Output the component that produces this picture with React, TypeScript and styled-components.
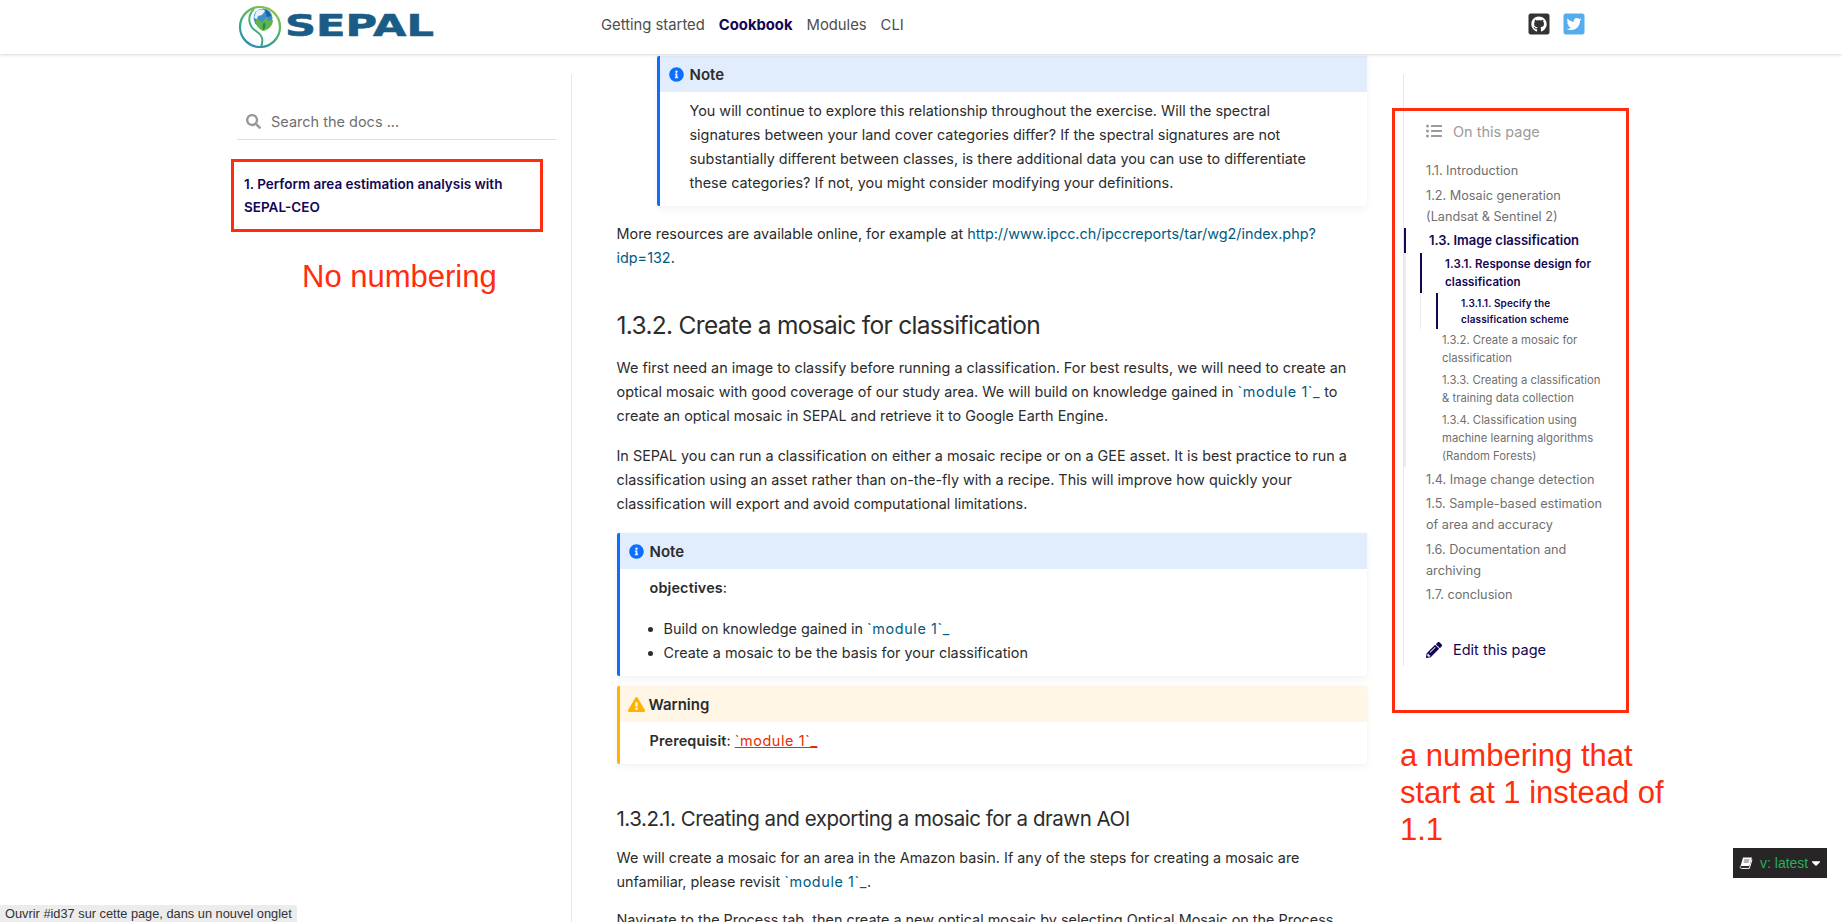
import React from "react";
import styled, { createGlobalStyle } from "styled-components";
import {
  FaCaretDown,
  FaExclamationTriangle,
  FaGithubSquare,
  FaInfoCircle,
  FaListUl,
  FaPencilAlt,
  FaSearch,
  FaTwitterSquare,
} from "react-icons/fa";

const INK = "#130654";
const TEXT = "#2c2c2c";
const LINK = "#005b81";
const MARK = "#ff2d0d";

const GlobalStyle = createGlobalStyle`
  html, body {
    margin: 0;
    height: 100%;
    overflow: hidden;
    background: #fff;
  }
  body {
    font-family: Inter, "Noto Sans", sans-serif;
    color: ${TEXT};
  }
  * { box-sizing: border-box; }
`;

const Page = styled.div`
  position: relative;
  height: 100vh;
  overflow: hidden;
  display: flex;
  flex-direction: column;
`;

/* top bar */
const Header = styled.header`
  position: relative;
  z-index: 2;
  flex: 0 0 54px;
  display: flex;
  align-items: center;
  padding: 0 256.5px 0 238px;
  background: #fff;
  box-shadow: 0 1px 3px rgba(0, 0, 0, 0.16);
`;

const Brand = styled.a`
  flex: 0 0 363px;
  display: flex;
  align-items: center;
  height: 54px;
`;

const Wordmark = styled.span`
  display: inline-block;
  margin: -4px 0 0 3px;
  font-family: "DejaVu Sans", sans-serif;
  font-weight: 700;
  font-size: 31px;
  line-height: 1;
  color: #1a5c86;
  -webkit-text-stroke: 0.6px #1a5c86;
  transform: scaleX(1.39);
  transform-origin: left center;
`;

const TopNav = styled.nav`
  display: flex;
  gap: 14px;
`;

const TopLink = styled.a<{ $active?: boolean }>`
  font-size: 14.8px;
  line-height: 22px;
  margin-top: -4px;
  font-weight: ${(p) => (p.$active ? 700 : 400)};
  color: ${(p) => (p.$active ? INK : "#4d4d4d")};
`;

const Socials = styled.div`
  margin-left: auto;
  display: flex;
  gap: 11px;
  margin-top: -7px;
`;

const Social = styled.a<{ $color: string }>`
  display: flex;
  color: ${(p) => p.$color};
  font-size: 24px;
`;

/* three columns */
const Body = styled.div`
  flex: 1;
  min-height: 0;
  display: grid;
  grid-template-columns: 572px 831px 1fr;
`;

const Sidebar = styled.aside`
  margin-top: 20px;
  padding: 30px 15px 0 237px;
  border-right: 1px solid #e6e6e6;
`;

const SearchForm = styled.form`
  display: flex;
  align-items: center;
  gap: 10px;
  height: 36px;
  padding-left: 9px;
  border-bottom: 1px solid #dedede;
  color: #999;
  font-size: 15px;
`;

const SearchInput = styled.input`
  flex: 1;
  border: 0;
  outline: 0;
  padding: 0;
  font: inherit;
  font-size: 14.5px;
  background: transparent;
  &::placeholder {
    color: #6f6f6f;
    opacity: 1;
  }
`;

const SideLink = styled.a`
  display: block;
  margin-top: 33px;
  padding: 0 30px 0 7px;
  font-size: 13.5px;
  font-weight: 600;
  line-height: 23px;
  color: ${INK};
`;

const Main = styled.main`
  padding: 2px 36px 0 44.5px;
  min-width: 0;
`;

const Admonition = styled.section<{ $indent?: boolean; $tone: "note" | "warning"; $gap?: number }>`
  margin: ${(p) => p.$gap ?? 0}px 0 0 ${(p) => (p.$indent ? 40 : 0)}px;
  padding-bottom: 11px;
  border-left: 3px solid ${(p) => (p.$tone === "note" ? "#0d6efd" : "#ffb300")};
  border-radius: 2px;
  box-shadow: 0 3px 8px rgba(0, 0, 0, 0.05), 0 0 1px rgba(0, 0, 0, 0.1);
`;

const AdmonitionTitle = styled.div<{ $tone: "note" | "warning" }>`
  display: flex;
  align-items: center;
  gap: ${(p) => (p.$tone === "note" ? 6 : 4)}px;
  height: 36px;
  padding-left: ${(p) => (p.$tone === "note" ? 9 : 8)}px;
  font-size: 15px;
  font-weight: 600;
  background: ${(p) => (p.$tone === "note" ? "#e1edfc" : "#fff6e5")};
  svg {
    flex: 0 0 auto;
    font-size: ${(p) => (p.$tone === "note" ? 15 : 17)}px;
    color: ${(p) => (p.$tone === "note" ? "#0d6efd" : "#ffb300")};
  }
`;

const AdmonitionBody = styled.div`
  padding: 7px 37px 0 30px;
`;

const Text = styled.p<{ $gap?: number }>`
  margin: ${(p) => p.$gap ?? 0}px 0 0;
  font-size: 14.4px;
  line-height: 24px;
  strong {
    font-weight: 600;
    letter-spacing: 0.15px;
  }
`;

const Link = styled.a`
  color: ${LINK};
`;

const ModuleRef = styled(Link)`
  letter-spacing: 0.6px;
`;

const WarnLink = styled.a`
  color: #e32e00;
  letter-spacing: 0.6px;
  text-decoration: underline;
`;

const Bullets = styled.ul`
  margin: 17px 0 0;
  padding: 0 0 0 14px;
  font-size: 14.4px;
  line-height: 24px;
`;

const SectionTitle = styled.h2`
  margin: 37px 0 13px;
  font-size: 24.5px;
  font-weight: 400;
  line-height: 36px;
  letter-spacing: -0.69px;
`;

const SubTitle = styled.h3`
  margin: 40px 0 12px;
  font-size: 20.5px;
  font-weight: 400;
  line-height: 30px;
  letter-spacing: -0.47px;
`;

/* right hand table of contents */
const Toc = styled.aside`
  align-self: start;
  height: 592px;
  margin-top: 20px;
  padding-top: 46px;
  border-left: 1px solid #e6e6e6;
  width: 202px;
`;

const TocHeading = styled.div`
  display: flex;
  align-items: center;
  gap: 11px;
  height: 22px;
  margin-bottom: 16px;
  padding-left: 22px;
  font-size: 14.5px;
  color: #9b9b9b;
  svg {
    font-size: 16px;
  }
`;

const TocList = styled.ul`
  list-style: none;
  margin: 0;
  padding: 0;
`;

const TocSubList = styled(TocList)<{ $thin?: boolean }>`
  border-left: ${(p) => (p.$thin ? "1px solid #ececec" : "2px solid #ececec")};
  padding-left: ${(p) => (p.$thin ? 15 : 14)}px;
`;

const TocLink = styled.a<{ $level: 1 | 2 | 3; $active?: boolean }>`
  display: block;
  padding: ${(p) => (p.$level === 1 ? "2px 0 1.5px" : "2px 0")};
  padding-left: ${(p) => (p.$active ? 23 : 22)}px;
  border-left: ${(p) => (p.$active ? `2px solid ${INK}` : "0")};
  font-size: ${(p) =>
    p.$level === 1 ? (p.$active ? 13 : 12.7) : p.$level === 2 ? (p.$active ? 11.5 : 11.3) : 10}px;
  letter-spacing: ${(p) => (p.$active && p.$level > 1 ? 0.12 : 0)}px;
  line-height: ${(p) => (p.$level === 1 ? 21 : p.$level === 2 ? 18 : 16)}px;
  font-weight: ${(p) => (p.$active ? 600 : 400)};
  color: ${(p) => (p.$active ? INK : "#6f6f6f")};
`;

const EditLink = styled.a`
  display: flex;
  align-items: center;
  gap: 11px;
  height: 22px;
  margin-top: 32px;
  padding-left: 22px;
  font-size: 14.5px;
  color: ${INK};
  svg {
    font-size: 16px;
  }
`;

/* things lying over the page */
const LeftMark = styled.div`
  position: absolute;
  left: 231px;
  top: 159px;
  width: 312px;
  height: 73px;
  border: 3px solid ${MARK};
`;

const RightMark = styled.div`
  position: absolute;
  left: 1392px;
  top: 108px;
  width: 237px;
  height: 605px;
  border: 3px solid ${MARK};
`;

const LeftRemark = styled.div`
  position: absolute;
  left: 302px;
  top: 258px;
  font-family: "Liberation Sans", Arial, sans-serif;
  font-size: 31px;
  line-height: 38px;
  color: ${MARK};
`;

const RightRemark = styled.div`
  position: absolute;
  left: 1400px;
  top: 737px;
  width: 290px;
  font-family: "Liberation Sans", Arial, sans-serif;
  font-size: 31px;
  line-height: 37px;
  color: ${MARK};
`;

const VersionBadge = styled.div`
  position: fixed;
  right: 15px;
  bottom: 44px;
  width: 94px;
  height: 30px;
  display: flex;
  align-items: center;
  padding-left: 6px;
  gap: 7px;
  background: #272525;
  color: #fff;
  font-family: "Liberation Sans", Arial, sans-serif;
  font-size: 14px;
`;

const VersionText = styled.span`
  color: #27ae60;
  margin-right: -6px;
`;

const StatusTip = styled.div`
  position: fixed;
  left: 0;
  bottom: 0;
  height: 17px;
  width: 297px;
  padding-left: 5px;
  background: #ececec;
  border-top-right-radius: 3px;
  font-family: "Liberation Sans", Arial, sans-serif;
  font-size: 12.8px;
  line-height: 17px;
  color: #333;
  white-space: nowrap;
`;

const LogoMark = () => (
  <svg width="44" height="42" viewBox="0 0 44 42" fill="none" aria-hidden="true">
    <defs>
      <linearGradient id="ring" x1="0.8" y1="0" x2="0.3" y2="1">
        <stop offset="0" stopColor="#8cc63f" />
        <stop offset="0.55" stopColor="#3fae7a" />
        <stop offset="1" stopColor="#2b8db0" />
      </linearGradient>
    </defs>
    <circle cx="22" cy="21" r="20" stroke="url(#ring)" strokeWidth="2.2" />
    <path d="M16 3C9 10 10 20 18 25C24 29 26 33 23 41" stroke="url(#ring)" strokeWidth="2" />
    <circle cx="25" cy="12" r="9.5" fill="#3c8fcf" />
    <path d="M18 6c3-3 7-3 9-1l-3 4-4 1-1 3-3-1z" fill="#e8f2f8" />
    <path d="M27 4c3 0 5 3 6 6l-4 1z" fill="#1c5fa3" />
    <path d="M25 25c-6-3-8-8-7-12 3 0 5 2 6 4 1-3 3-5 5-6 1 2 1 3 1 4 2-1 3-1 5-1 0 5-4 10-10 11z" fill="#5fb548" />
    <path d="M25 24c-1-3 0-6 1-8 2 2 2 6-1 8z" fill="#1f8a4c" />
  </svg>
);

const BookIcon = () => (
  <svg width="14" height="14" viewBox="0 0 14 14" aria-hidden="true">
    <path d="M4 1.5h9l-2.6 8.6H1.6z" fill="#fff" />
    <path d="M1.4 10.4c-.5 1 0 2 1 2h7.9l2.7-8.8" fill="none" stroke="#fff" strokeWidth="1" />
    <path d="M5.2 4h5.2M4.6 6h5.2" stroke="#272525" strokeWidth="0.7" />
  </svg>
);

const App = () => {
  return (
    <>
      <GlobalStyle />
      <Page>
        <Header>
          <Brand>
            <LogoMark />
            <Wordmark>SEPAL</Wordmark>
          </Brand>
          <TopNav>
            <TopLink>Getting started</TopLink>
            <TopLink $active>Cookbook</TopLink>
            <TopLink>Modules</TopLink>
            <TopLink>CLI</TopLink>
          </TopNav>
          <Socials>
            <Social $color="#333">
              <FaGithubSquare />
            </Social>
            <Social $color="#55acee">
              <FaTwitterSquare />
            </Social>
          </Socials>
        </Header>

        <Body>
          <Sidebar>
            <SearchForm>
              <FaSearch />
              <SearchInput placeholder="Search the docs ..." />
            </SearchForm>
            <SideLink>1. Perform area estimation analysis with SEPAL-CEO</SideLink>
          </Sidebar>

          <Main>
            <Admonition $tone="note" $indent>
              <AdmonitionTitle $tone="note">
                <FaInfoCircle />
                Note
              </AdmonitionTitle>
              <AdmonitionBody>
                <Text>
                  You will continue to explore this relationship throughout the exercise. Will the spectral signatures
                  between your land cover categories differ? If the spectral signatures are not substantially different
                  between classes, is there additional data you can use to differentiate these categories? If not, you
                  might consider modifying your definitions.
                </Text>
              </AdmonitionBody>
            </Admonition>

            <Text $gap={16}>
              More resources are available online, for example at{" "}
              <Link>
                http://www.ipcc.ch/ipccreports/tar/wg2/index.php?
                <wbr />
                idp=132
              </Link>
              .
            </Text>

            <SectionTitle>1.3.2. Create a mosaic for classification</SectionTitle>
            <Text>
              We first need an image to classify before running a classification. For best results, we will need to
              create an optical mosaic with good coverage of our study area. We will build on knowledge gained in{" "}
              <ModuleRef>`module 1`_</ModuleRef> to create an optical mosaic in SEPAL and retrieve it to Google Earth
              Engine.
            </Text>
            <Text $gap={16}>
              In SEPAL you can run a classification on either a mosaic recipe or on a GEE asset. It is best practice to
              run a classification using an asset rather than on-the-fly with a recipe. This will improve how quickly
              your classification will export and avoid computational limitations.
            </Text>

            <Admonition $tone="note" $gap={17}>
              <AdmonitionTitle $tone="note">
                <FaInfoCircle />
                Note
              </AdmonitionTitle>
              <AdmonitionBody>
                <Text>
                  <strong>objectives</strong>:
                </Text>
                <Bullets>
                  <li>
                    Build on knowledge gained in <ModuleRef>`module 1`_</ModuleRef>
                  </li>
                  <li>Create a mosaic to be the basis for your classification</li>
                </Bullets>
              </AdmonitionBody>
            </Admonition>

            <Admonition $tone="warning" $gap={10}>
              <AdmonitionTitle $tone="warning">
                <FaExclamationTriangle />
                Warning
              </AdmonitionTitle>
              <AdmonitionBody>
                <Text>
                  <strong>Prerequisit</strong>: <WarnLink>`module 1`_</WarnLink>
                </Text>
              </AdmonitionBody>
            </Admonition>

            <SubTitle>1.3.2.1. Creating and exporting a mosaic for a drawn AOI</SubTitle>
            <Text>
              We will create a mosaic for an area in the Amazon basin. If any of the steps for creating a mosaic are
              unfamiliar, please revisit <ModuleRef>`module 1`_</ModuleRef>.
            </Text>
            <Text $gap={14}>
              Navigate to the Process tab, then create a new optical mosaic by selecting Optical Mosaic on the Process
            </Text>
          </Main>

          <Toc>
            <TocHeading>
              <FaListUl />
              On this page
            </TocHeading>
            <TocList>
              <li>
                <TocLink $level={1}>1.1. Introduction</TocLink>
              </li>
              <li>
                <TocLink $level={1}>1.2. Mosaic generation (Landsat &amp; Sentinel 2)</TocLink>
              </li>
              <li>
                <TocLink $level={1} $active>
                  1.3. Image classification
                </TocLink>
                <TocSubList>
                  <li>
                    <TocLink $level={2} $active>
                      1.3.1. Response design for classification
                    </TocLink>
                    <TocSubList $thin>
                      <li>
                        <TocLink $level={3} $active>
                          1.3.1.1. Specify the classification scheme
                        </TocLink>
                      </li>
                    </TocSubList>
                  </li>
                  <li>
                    <TocLink $level={2}>1.3.2. Create a mosaic for classification</TocLink>
                  </li>
                  <li>
                    <TocLink $level={2}>1.3.3. Creating a classification &amp; training data collection</TocLink>
                  </li>
                  <li>
                    <TocLink $level={2}>1.3.4. Classification using machine learning algorithms (Random Forests)</TocLink>
                  </li>
                </TocSubList>
              </li>
              <li>
                <TocLink $level={1}>1.4. Image change detection</TocLink>
              </li>
              <li>
                <TocLink $level={1}>1.5. Sample-based estimation of area and accuracy</TocLink>
              </li>
              <li>
                <TocLink $level={1}>1.6. Documentation and archiving</TocLink>
              </li>
              <li>
                <TocLink $level={1}>1.7. conclusion</TocLink>
              </li>
            </TocList>
            <EditLink>
              <FaPencilAlt />
              Edit this page
            </EditLink>
          </Toc>
        </Body>

        <LeftMark />
        <LeftRemark>No numbering</LeftRemark>
        <RightMark />
        <RightRemark>a numbering that start at 1 instead of 1.1</RightRemark>

        <VersionBadge>
          <BookIcon />
          <VersionText>v: latest</VersionText>
          <FaCaretDown />
        </VersionBadge>
        <StatusTip>Ouvrir #id37 sur cette page, dans un nouvel onglet</StatusTip>
      </Page>
    </>
  );
};

export default App;
